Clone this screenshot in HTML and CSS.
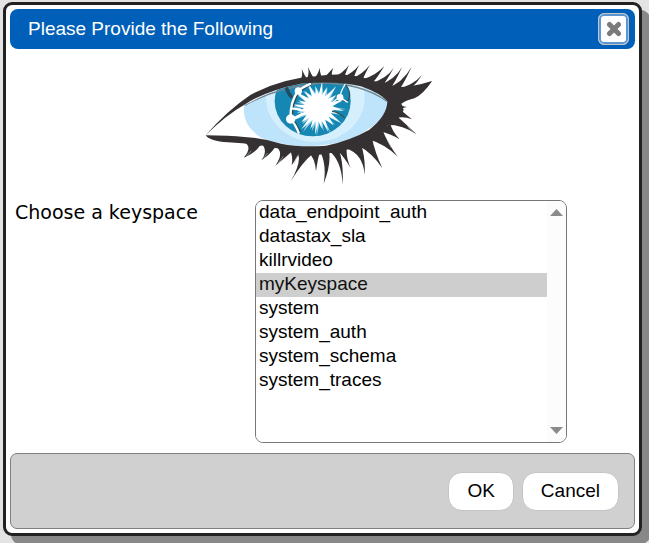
FILE: index.html
```
<!DOCTYPE html>
<html lang="en">
<head>
  <meta charset="UTF-8">
  <meta name="viewport" content="width=device-width, initial-scale=1.0">
  <title>Please Provide the Following</title>
  <link rel="stylesheet" href="styles.css">
</head>
<body>
  <form class="dialog">
    <!-- Title bar -->
    <header class="dialog-header">
      <h1 class="dialog-title">Please Provide the Following</h1>
      <button class="close" type="button" aria-label="Close">
        <svg class="close-icon" viewBox="0 0 16 16">
          <path d="M3.5 3.5L12.500 12.500M12.500 3.500L3.500 12.500" />
        </svg>
      </button>
    </header>

    <!-- Cassandra eye -->
    <svg class="logo" viewBox="12 12 708 378" role="img" aria-label="Cassandra">
      <defs>
        <clipPath id="eye">
          <path d="M130 142Q180 114 225 97Q290 74 360 71Q430 70 480 85Q530 103 559 130Q560 150 545 175Q520 210 445 245Q400 262 300 265Q230 259 180 239Q120 200 130 142Z" />
        </clipPath>
      </defs>
      <g clip-path="url(#eye)">
        <rect x="100" y="50" width="480" height="230" fill="#bde4fa" />
        <ellipse cx="343" cy="120" rx="148" ry="132" fill="#d5effd" />
        <ellipse cx="335" cy="130" rx="114" ry="105" fill="#1587b2" />
        <path d="M130 142Q225 88 360 75Q480 75 559 130" fill="none" stroke="#708792" stroke-width="5" />
        <polygon fill="#8fd0e8" points="437,154 393,155 419,171 389,165 424,198 382,177 402,201 372,186 390,227 364,190 368,220 356,195 347,235 346,193 333,219 335,189 306,222 325,183 304,199 317,172 277,187 312,163 287,166 310,150 268,147 312,142 286,133 315,132 279,104 325,121 306,99 334,113 316,75 346,108 342,83 356,105 363,73 367,109 379,87 378,116 405,83 386,125 406,110 391,137 432,118 395,146" />
        <polygon fill="#fff" points="429,159 392,155 410,167 388,165 417,193 382,175 397,202 372,184 382,222 362,188 362,212 353,190 342,230 344,189 328,213 335,185 301,214 325,179 301,193 317,170 275,178 312,161 288,158 310,151 269,139 312,141 292,127 316,132 281,98 324,122 310,98 333,116 322,76 343,111 344,86 353,110 364,70 362,112 378,88 371,116 405,86 381,123 404,112 388,133 430,125 393,144" />
        <path d="M256 88Q260 105 273 119M331 76Q306 90 294 99Q270 130 271 184Q285 198 295 224" fill="none" stroke="#25485b" stroke-width="10" />
        <path d="M330 76Q304 88 292 98Q266 132 269 183Q284 200 294 227M269 183Q292 181 305 165M272 151L300 155" fill="none" stroke="#fff" stroke-width="7" />
        <path d="M434 80Q452 104 443 123Q438 139 417 119M393 160Q411 161 431 179" fill="none" stroke="#34525d" stroke-width="4" />
        <path d="M433 78Q419 99 417 118Q399 126 392 139M417 118L440 133" fill="none" stroke="#fff" stroke-width="4" />
        <circle cx="292" cy="99" r="11" fill="#fff" />
        <circle cx="269" cy="183" r="14" fill="#fff" />
        <circle cx="417" cy="118" r="10" fill="#fff" />
      </g>
      <!-- Lids -->
      <path fill="#353132" d="M14 232Q78 158 148 111Q240 61 345 55Q430 41 505 64Q550 82 585 88Q640 86 693 69Q665 106 638 120Q610 130 601 137L608 155L600 174L578 188Q568 194 558 204Q520 248 465 268Q410 284 350 291Q290 289 250 276Q180 258 80 253Q27 250 14 232Q85 233 130 237Q180 239 240 257Q300 269 375 263Q445 249 505 215Q558 174 559 130Q540 107 480 85Q410 67 300 77Q200 96 135 137Q73 172 14 232Z" />
      <!-- Upper lashes -->
      <path fill="#353132" d="M297 68Q307 51 302 33Q310 52 320 65ZM316 65Q326 50 321 27Q331 50 340 63ZM337 63Q351 52 356 29Q357 50 366 62ZM366 60Q381 48 397 29Q389 46 395 58ZM392 58Q424 49 444 21Q433 46 430 58ZM425 57Q456 45 475 20Q462 45 458 60ZM452 61Q486 48 507 20Q489 52 485 66ZM480 66Q525 53 550 24Q530 58 516 73ZM510 75Q556 63 578 30Q557 68 545 82ZM533 82Q580 67 603 28Q581 76 568 91ZM556 90Q603 77 632 26Q605 84 591 99ZM582 95Q635 84 663 51Q634 96 604 108ZM590 107Q650 104 693 69Q667 109 640 121Q615 130 590 130Z" />
      <!-- Lower lashes -->
      <path fill="#353132" d="M128 252Q157 266 128 299Q163 285 176 264L200 256ZM180 256Q203 277 181 307Q210 287 220 271L240 262ZM222 264Q252 281 223 323Q263 291 276 277ZM262 272Q278 287 272 322Q285 300 300 282ZM288 279Q306 306 269 370Q306 311 334 289ZM322 285Q342 298 345 340Q350 305 355 287ZM360 286Q377 325 368 377Q389 325 385 285ZM385 280Q421 307 425 379Q428 315 414 277ZM408 276Q430 297 449 331Q435 299 437 270ZM435 271Q486 288 491 350Q494 301 480 259ZM470 262Q514 285 544 331Q522 284 513 241ZM502 244Q551 258 590 296Q558 253 545 217ZM536 220Q565 226 596 244Q572 219 568 196ZM558 200Q606 200 647 229Q610 194 590 176ZM582 181Q608 174 633 184Q609 165 597 154ZM591 159Q604 149 617 147Q601 145 596 136Z" />
      <!-- Shine between the lower lashes -->
      <path fill="none" stroke="#bbb" stroke-width="2" d="M279 317Q285 300 292 290M232 315L247 295M137 294L151 278M188 300L199 285M571 269L560 248M638 222L620 207M250 284" />
    </svg>

    <div class="field">
      <label class="field-label" for="keyspace">Choose a keyspace</label>
      <div class="listbox">
        <select class="keyspaces" id="keyspace" name="keyspace" size="10">
          <option>data_endpoint_auth</option>
          <option>datastax_sla</option>
          <option>killrvideo</option>
          <option selected>myKeyspace</option>
          <option>system</option>
          <option>system_auth</option>
          <option>system_schema</option>
          <option>system_traces</option>
        </select>
        <div class="scrollbar" aria-hidden="true">
          <svg class="arrow" viewBox="0 0 13 7"><path d="M0 7L6.5 0L13 7Z" /></svg>
          <svg class="arrow" viewBox="0 0 13 7"><path d="M0 0L6.5 7L13 0Z" /></svg>
        </div>
      </div>
    </div>

    <footer class="dialog-footer">
      <button class="btn" type="submit">OK</button>
      <button class="btn" type="button">Cancel</button>
    </footer>
  </form>
</body>
</html>
```

FILE: styles.css
```
* {
  box-sizing: border-box;
}

body {
  margin: 0;
  padding: 2px 7px 7px 3px;
  background: #e3e3e3;
  font-family: Arial, "Liberation Sans", sans-serif;
  font-size: 19px;
  overflow: hidden;
}

/* Dialog window */
.dialog {
  display: flex;
  flex-direction: column;
  padding: 4px;
  border: 3px solid #222;
  border-radius: 9px;
  background: #fff;
  box-shadow: 8px 8px 0 #888;
}

.dialog-header {
  display: flex;
  align-items: center;
  justify-content: space-between;
  height: 40px;
  padding: 0 6px 0 18px;
  border-radius: 8px;
  background: #005fb8;
}

.dialog-title {
  margin: 0;
  color: #fff;
  font-size: 19px;
  font-weight: normal;
}

.close {
  display: flex;
  align-items: center;
  justify-content: center;
  width: 31px;
  height: 32px;
  padding: 0;
  border: 1px solid #c5c5c5;
  border-radius: 6px;
  background: #fff;
  box-shadow: inset 0 0 0 2px #5b96d0;
}

.close-icon {
  width: 16px;
  height: 16px;
  fill: none;
  stroke: #7b7b7b;
  stroke-width: 5;
  stroke-linecap: round;
}

.logo {
  align-self: center;
  width: 236px;
  height: 126px;
  margin: 13px 0 12px;
}

/* Keyspace row */
.field {
  display: grid;
  grid-template-columns: 240px 1fr;
  padding: 0 68px 10px 5px;
}

.field-label {
  font-family: Verdana, "DejaVu Sans", sans-serif;
  line-height: 24px;
}

.listbox {
  display: flex;
  border: 1px solid #767676;
  border-radius: 8px;
  overflow: hidden;
}

.keyspaces {
  flex: 1;
  min-width: 0;
  height: 241px;
  padding: 0;
  border: 0;
  outline: 0;
  background: #fff;
  color: #000;
  font: inherit;
  overflow: hidden;
}

.keyspaces option {
  height: 24px;
  min-height: 24px;
  padding: 0 3px;
  line-height: 22px;
}

.scrollbar {
  display: flex;
  flex-direction: column;
  align-items: center;
  justify-content: space-between;
  width: 19px;
  padding: 8px 0;
  background: #fcfcfc;
}

.arrow {
  width: 13px;
  height: 7px;
  fill: #8a8a8a;
}

/* Button bar */
.dialog-footer {
  display: flex;
  align-items: center;
  justify-content: flex-end;
  gap: 8px;
  height: 76px;
  padding: 0 15px;
  border: 1px solid #808080;
  border-radius: 7px;
  background: #d0d0d0;
}

.btn {
  height: 39px;
  padding: 0 18px;
  border: 1px solid #c5c5c5;
  border-radius: 14px;
  background: #fff;
  color: #000;
  font: inherit;
}
```
